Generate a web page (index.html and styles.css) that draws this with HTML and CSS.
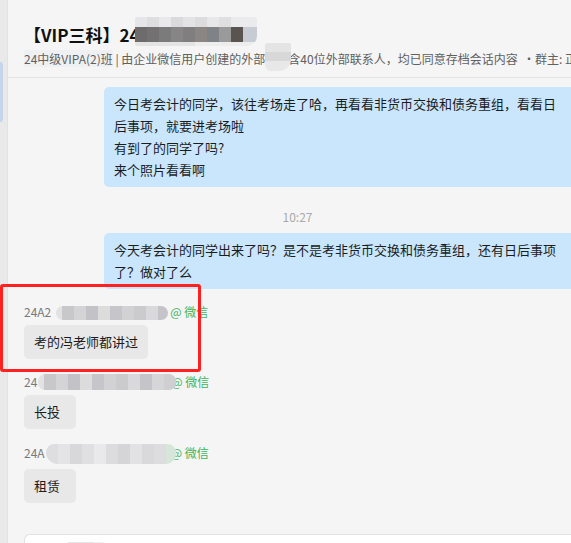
FILE: index.html
```html
<!DOCTYPE html>
<html lang="zh-CN">
<head>
    <meta charset="UTF-8">
    <meta name="viewport" content="width=device-width, initial-scale=1.0">
    <title>会话存档</title>
    <link rel="stylesheet" href="styles.css">
</head>
<body>
    <aside class="side">
        <div class="side-active"></div>
    </aside>
    <main class="chat">
        <header class="head">
            <h1 class="title">【VIP三科】24<span class="mask mask-title"></span></h1>
            <p class="desc"><span class="desc-tag">24中级VIPA(2)班</span> | 由企业微信用户创建的外部<span class="mask mask-desc"></span>含40位外部联系人，均已同意存档会话内容 &nbsp;·群主: 正</p>
        </header>
        <section class="msgs">
            <div class="msg-out">
                <div class="bubble">今日考会计的同学，该往考场走了哈，再看看非货币交换和债务重组，看看日后事项，就要进考场啦<br>有到了的同学了吗?<br>来个照片看看啊</div>
            </div>
            <div class="time">10:27</div>
            <div class="msg-out">
                <div class="bubble">今天考会计的同学出来了吗？是不是考非货币交换和债务重组，还有日后事项了？做对了么</div>
            </div>
            <div class="msg-in">
                <div class="sender">24A2<span class="mask mask-name1"></span><span class="src">@ 微信</span></div>
                <div class="bubble">考的冯老师都讲过</div>
            </div>
            <div class="msg-in">
                <div class="sender">24<span class="mask mask-name2"></span><span class="src">@ 微信</span></div>
                <div class="bubble">长投</div>
            </div>
            <div class="msg-in">
                <div class="sender">24A<span class="mask mask-name3"></span><span class="src">@ 微信</span></div>
                <div class="bubble">租赁</div>
            </div>
        </section>
        <footer class="composer">
            <span class="mask mask-input"></span>
        </footer>
    </main>
    <div class="mark"></div>
</body>
</html>
```

FILE: styles.css
```css
body {
    margin: 0;
    height: 543px;
    overflow: hidden;
    display: flex;
    position: relative;
    font-family: "Noto Sans CJK SC", "Noto Sans", sans-serif;
    background-color: #f5f5f5;
    color: #1c1c1c;
}
.side {
    width: 7px;
    flex-shrink: 0;
    background-color: #e9e9e9;
    border-right: 1px solid #e2e2e2;
    padding-top: 62px;
}
.side-active {
    width: 3px;
    height: 60px;
    background-color: #c6d6ea;
    border-radius: 0 3px 3px 0;
}
.chat {
    flex: 1;
    min-width: 0;
    overflow: hidden;
    background-color: #f5f5f5;
}
.head {
    height: 77px;
    box-sizing: content-box;
    border-bottom: 1px solid #e3e3e3;
    padding-left: 16px;
    white-space: nowrap;
    overflow: hidden;
}
.title {
    margin: 0;
    padding-top: 23px;
    font-size: 17px;
    line-height: 24px;
    font-weight: bold;
    color: #111;
}
.desc {
    margin: 4px 0 0;
    font-size: 12px;
    line-height: 16px;
    color: #606060;
}
.desc-tag {
    background-color: #eff0f2;
}
.mask {
    display: inline-block;
    position: relative;
    z-index: 1;
}
.mask-title {
    width: 122px;
    height: 29px;
    margin-left: -5px;
    margin-top: -6px;
    vertical-align: top;
    border-radius: 2px 2px 10px 2px;
    background:
        linear-gradient(90deg, #e6e6e8 0 12px, #dedee0 12px 24px, #e9e9eb 24px 36px, #dadadc 36px 48px, #e3e3e5 48px 60px, #dcdcde 60px 72px, #e7e7e9 72px 84px, #dfdfe1 84px 96px, #ebebed 96px 122px) top / 100% 10px no-repeat,
        linear-gradient(90deg, #6d6b6b 0 12px, #737171 12px 24px, #7b7b7b 24px 36px, #878585 36px 48px, #807e7e 48px 60px, #8b8583 60px 72px, #7f8286 72px 84px, #9b9a9a 84px 96px, #59544f 96px 108px, #c7cbd3 108px 122px) 0 10px / 100% 15px no-repeat,
        linear-gradient(90deg, #e4e4e4 0 60px, #ededed 60px 122px) bottom / 100% 4px no-repeat;
}
.mask-desc {
    width: 26px;
    height: 28px;
    margin-top: -8px;
    margin-right: -3px;
    vertical-align: top;
    border-radius: 2px 2px 12px 6px;
    background: linear-gradient(180deg, #e4e4e4 0 9px, #d8d8d8 9px 18px, #e8e8e8 18px 28px);
}
.msgs {
    padding: 9px 0 0 16px;
}
.bubble {
    font-size: 13px;
    line-height: 22px;
    padding: 6px 10px;
    border-radius: 5px;
}
.msg-out .bubble {
    margin-left: 80px;
    width: 443px;
    padding-right: 40px;
    background-color: #c9e6fd;
}
.time {
    margin: 22px 0 8px;
    text-align: center;
    font-size: 12px;
    line-height: 16px;
    color: #aaa;
}
.msg-in {
    margin-top: 15px;
}
.msg-in .bubble {
    display: inline-block;
    min-width: 52px;
    box-sizing: border-box;
    background-color: #e8e8e8;
}
.sender {
    font-size: 12px;
    line-height: 16px;
    margin-bottom: 5px;
    color: #7a7a7a;
    white-space: nowrap;
}
.src {
    color: #3fb45c;
    margin-left: 2px;
}
.mask-name1,
.mask-name2,
.mask-name3 {
    height: 14px;
    vertical-align: -3px;
    border-radius: 7px;
    background: linear-gradient(90deg, #e2e2e3 0 6px, #c8c8ca 6px 18px, #d4d4d6 18px 30px, #c3c3c7 30px 42px, #dcdcdd 42px 54px, #c6c6ca 54px 66px, #d2d2d4 66px 78px, #cbcbce 78px 90px, #d9d9db 90px 102px, #c5c5c9 102px 114px, #d6d6d8 114px 126px, #cfcfd2 126px);
}
.mask-name1 {
    width: 112px;
    margin-left: 5px;
}
.mask-name2 {
    width: 138px;
    height: 16px;
    margin-left: 1px;
    margin-right: -7px;
}
.mask-name3 {
    width: 130px;
    height: 20px;
    vertical-align: -6px;
    margin-left: 1px;
    margin-right: -7px;
    border-radius: 10px 10px 12px 14px;
    background: linear-gradient(90deg, #dedee0 0 12px, #e4e4e6 12px 24px, #d8d8da 24px 36px, #e0e0e2 36px 48px, #e9e9eb 48px 60px, #dcdcde 60px 72px, #d5d5d8 72px 84px, #e2e2e4 84px 96px, #d9d9db 96px 108px, #dddddf 108px 120px, #d6e6da 120px);
}
.composer {
    margin: 31px 0 0 16px;
    height: 60px;
    background-color: #fff;
    border: 1px solid #e2e2e2;
    border-right: none;
    border-radius: 6px 0 0 0;
}
.mask-input {
    width: 40px;
    height: 20px;
    margin: 7px 0 0 41px;
    border-radius: 4px 4px 0 0;
    background: linear-gradient(90deg, #e6e6e6 0 28px, #f0f0f0 28px 40px);
}
.mark {
    position: absolute;
    left: 0;
    top: 284px;
    width: 201px;
    height: 88px;
    box-sizing: border-box;
    border: 3px solid #ff2020;
    border-radius: 3px;
}
```
